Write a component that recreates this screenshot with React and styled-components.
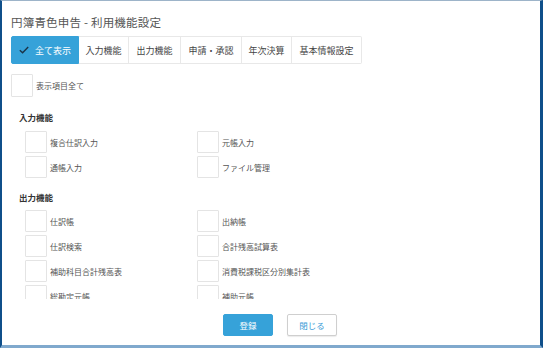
import React from "react";
import styled, { createGlobalStyle } from "styled-components";

const Global = createGlobalStyle`
  html, body { margin: 0; padding: 0; background: #fff; }
  body { font-family: "Noto Sans CJK JP", "Noto Sans", sans-serif; }
  * { box-sizing: border-box; }
`;

const Window = styled.div`
  width: 543px;
  height: 348px;
  display: flex;
  flex-direction: column;
  background: #fff;
  border-top: 1px solid #9db4c9;
  border-left: 2px solid #0f4f8a;
  border-right: 3px solid #0f4f8a;
  border-bottom: 3px solid #80a9cd;
  overflow: hidden;
`;

const Title = styled.div`
  margin: 12px 0 0 9px;
  height: 18px;
  line-height: 18px;
  font-size: 11.5px;
  color: #555;
  letter-spacing: 0.2px;
`;

const Tabs = styled.div`
  display: flex;
  margin: 5px 0 0 9px;
  height: 28px;
`;

const Tab = styled.div`
  display: flex;
  align-items: center;
  justify-content: center;
  gap: 6px;
  width: ${(p) => p.w}px;
  height: 28px;
  font-size: 9px;
  color: ${(p) => (p.active ? "#fff" : "#444")};
  background: ${(p) => (p.active ? "#36a2d9" : "#fff")};
  border: 1px solid ${(p) => (p.active ? "#36a2d9" : "#e8e8e8")};
  border-left-width: ${(p) => (p.first ? 1 : 0)}px;
  border-radius: ${(p) => (p.first ? "2px 0 0 2px" : p.last ? "0 2px 2px 0" : "0")};
`;

const Check = styled.svg`
  width: 10px;
  height: 8px;
`;

const Scroll = styled.div`
  height: 235px;
  overflow: hidden;
  padding: 10px 0 0 9px;
`;

const Row = styled.div`
  display: flex;
  align-items: center;
  height: ${(p) => p.h || 22}px;
  gap: 3px;
`;

const Box = styled.div`
  width: 22px;
  height: ${(p) => p.h || 22}px;
  border: 1px solid #e4e4e4;
  border-radius: 1px;
  background: #fff;
  flex: none;
`;

const Label = styled.span`
  font-size: 8px;
  color: #555;
  white-space: nowrap;
`;

const Heading = styled.div`
  margin: ${(p) => p.mt}px 0 ${(p) => p.mb}px 8px;
  height: 14px;
  line-height: 14px;
  font-size: 8.5px;
  font-weight: bold;
  color: #333;
`;

const Grid = styled.div`
  display: grid;
  grid-template-columns: 172px 172px;
  row-gap: 3px;
  padding-left: 14px;
`;

const Footer = styled.div`
  display: flex;
  justify-content: center;
  gap: 14px;
  padding: 15px 0 0 18px;
`;

const Button = styled.button`
  width: 50px;
  height: 22px;
  font-family: inherit;
  font-size: 8.5px;
  padding: 0;
  border-radius: 2px;
  cursor: pointer;
  color: ${(p) => (p.primary ? "#fff" : "#3b9ad6")};
  background: ${(p) => (p.primary ? "#36a2d9" : "#fff")};
  border: 1px solid ${(p) => (p.primary ? "#36a2d9" : "#cfcfcf")};
  box-shadow: ${(p) => (p.primary ? "none" : "0 1px 1px rgba(0,0,0,0.08)")};
`;

const tabs = [
  ["全て表示", 68],
  ["入力機能", 50],
  ["出力機能", 52],
  ["申請・承認", 61],
  ["年次決算", 50],
  ["基本情報設定", 70],
];

const input = ["複合仕訳入力", "元帳入力", "通帳入力", "ファイル管理"];
const output = [
  "仕訳帳",
  "出納帳",
  "仕訳検索",
  "合計残高試算表",
  "補助科目合計残高表",
  "消費税課税区分別集計表",
  "総勘定元帳",
  "補助元帳",
];

const Item = ({ label }) => (
  <Row>
    <Box />
    <Label>{label}</Label>
  </Row>
);

export default function App() {
  return (
    <>
      <Global />
      <Window>
        <Title>円簿青色申告 - 利用機能設定</Title>
        <Tabs>
          {tabs.map(([t, w], i) => (
            <Tab key={t} w={w} active={i === 0} first={i === 0} last={i === tabs.length - 1}>
              {i === 0 && (
                <Check viewBox="0 0 10 8">
                  <path d="M0.8 4.2 L3.6 6.8 L9.2 1" fill="none" stroke="#1b3347" strokeWidth="1.4" />
                </Check>
              )}
              {t}
            </Tab>
          ))}
        </Tabs>
        <Scroll>
          <Row h={23}>
            <Box h={23} />
            <Label>表示項目全て</Label>
          </Row>
          <Heading mt={13} mb={7}>入力機能</Heading>
          <Grid>
            {input.map((l) => (
              <Item key={l} label={l} />
            ))}
          </Grid>
          <Heading mt={12} mb={6}>出力機能</Heading>
          <Grid>
            {output.map((l) => (
              <Item key={l} label={l} />
            ))}
          </Grid>
        </Scroll>
        <Footer>
          <Button primary>登録</Button>
          <Button>閉じる</Button>
        </Footer>
      </Window>
    </>
  );
}
